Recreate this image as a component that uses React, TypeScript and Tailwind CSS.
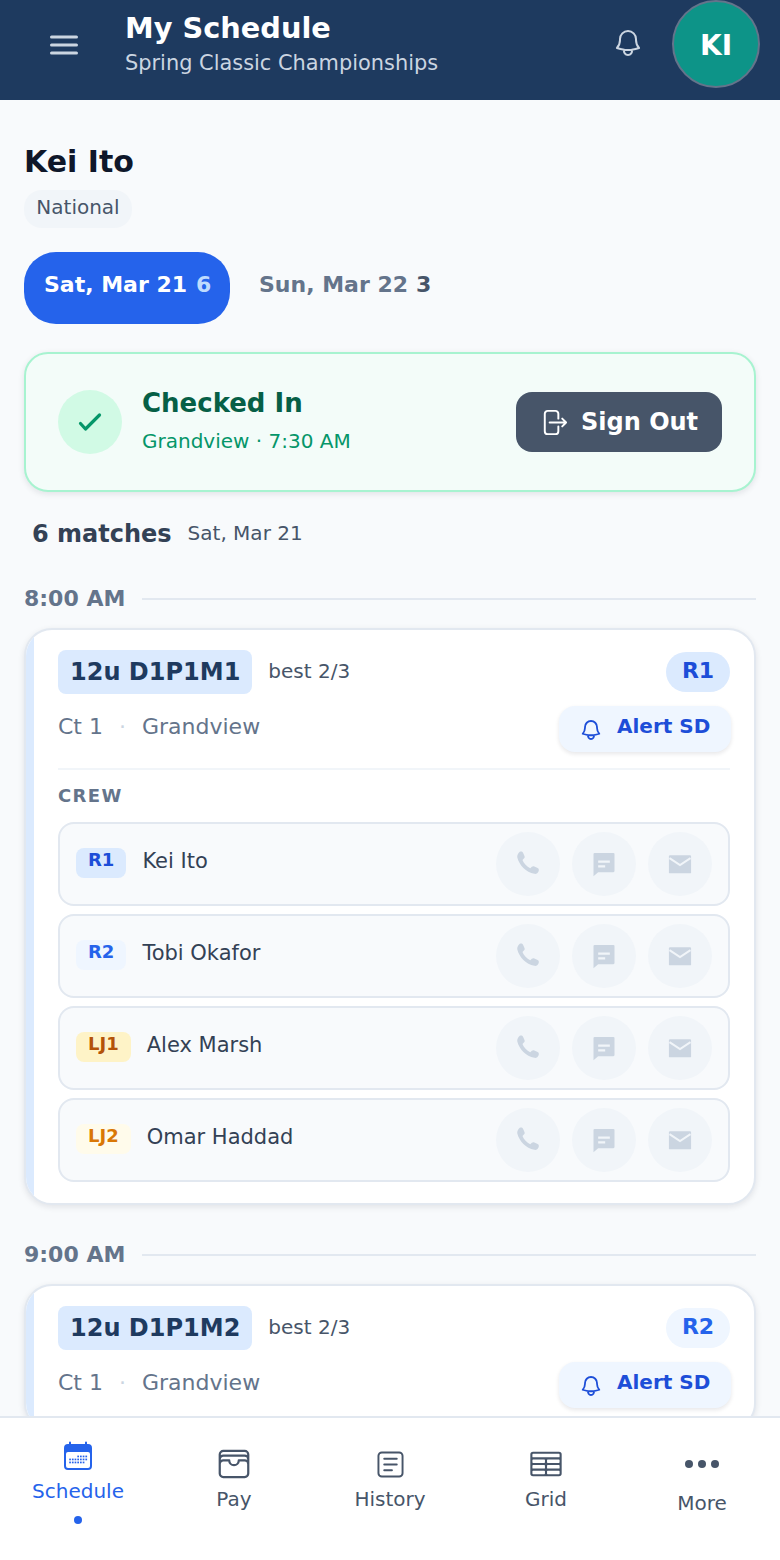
import React from "react";

const FONT = "font-['DejaVu_Sans',sans-serif]";

function Hero({ d, className, sw = 1.5 }: { d: string; className: string; sw?: number }) {
  return (
    <svg viewBox="0 0 24 24" fill="none" stroke="currentColor" strokeWidth={sw} strokeLinecap="round" strokeLinejoin="round" className={className}>
      <path d={d} />
    </svg>
  );
}

const BELL = "M14.857 17.082a23.848 23.848 0 005.454-1.31A8.967 8.967 0 0118 9.75v-.7V9A6 6 0 006 9v.75a8.967 8.967 0 01-2.312 6.022c1.733.64 3.56 1.085 5.455 1.31m5.714 0a24.255 24.255 0 01-5.714 0m5.714 0a3 3 0 11-5.714 0";
const SIGNOUT = "M15.75 9V5.25A2.25 2.25 0 0013.5 3h-6a2.25 2.25 0 00-2.25 2.25v13.5A2.25 2.25 0 007.5 21h6a2.25 2.25 0 002.25-2.25V15m3 0l3-3m0 0l-3-3m3 3H9";
const WALLET = "M21 12a2.25 2.25 0 00-2.25-2.25H15a3 3 0 11-6 0H5.25A2.25 2.25 0 003 12m18 0v6a2.25 2.25 0 01-2.25 2.25H5.25A2.25 2.25 0 013 18v-6m18 0V9M3 12V9m18 0a2.25 2.25 0 00-2.25-2.25H5.25A2.25 2.25 0 003 9m18 0V6a2.25 2.25 0 00-2.25-2.25H5.25A2.25 2.25 0 003 6v3";
const TABLE = "M3.375 19.5h17.25m-17.25 0a1.125 1.125 0 01-1.125-1.125M3.375 19.5h7.5c.621 0 1.125-.504 1.125-1.125m-9.75 0V5.625m0 12.75v-1.5c0-.621.504-1.125 1.125-1.125m18.375 2.625V5.625m0 12.75c0 .621-.504 1.125-1.125 1.125m1.125-1.125v-1.5c0-.621-.504-1.125-1.125-1.125m0 3.75h-7.5A1.125 1.125 0 0112 18.375m9.75-12.75c0-.621-.504-1.125-1.125-1.125H3.375c-.621 0-1.125.504-1.125 1.125m19.5 0v1.5c0 .621-.504 1.125-1.125 1.125M2.25 5.625v1.5c0 .621.504 1.125 1.125 1.125m0 0h17.25m-17.25 0h7.5c.621 0 1.125.504 1.125 1.125M3.375 8.25c-.621 0-1.125.504-1.125 1.125v1.5c0 .621.504 1.125 1.125 1.125m17.25-3.75h-7.5c-.621 0-1.125.504-1.125 1.125m8.625-1.125c.621 0 1.125.504 1.125 1.125v1.5c0 .621-.504 1.125-1.125 1.125m-17.25 0h7.5m-7.5 0c-.621 0-1.125.504-1.125 1.125v1.5c0 .621.504 1.125 1.125 1.125M12 10.875v-1.5m0 1.5c0 .621-.504 1.125-1.125 1.125M12 10.875c0 .621.504 1.125 1.125 1.125m-2.25 0c.621 0 1.125.504 1.125 1.125M13.125 12h7.5m-7.5 0c-.621 0-1.125.504-1.125 1.125M20.625 12c.621 0 1.125.504 1.125 1.125v1.5c0 .621-.504 1.125-1.125 1.125m-17.25 0h7.5M12 14.625v-1.5m0 1.5c0 .621-.504 1.125-1.125 1.125M12 14.625c0 .621.504 1.125 1.125 1.125m-2.25 0c.621 0 1.125.504 1.125 1.125m0 1.5v-1.5m0 0c0-.621.504-1.125 1.125-1.125m0 0h7.5";

function CalendarIcon() {
  const rows: [number, number[]][] = [
    [14.6, [14.3, 17, 19.7, 22.4]],
    [17.6, [6.2, 8.9, 11.6, 14.3, 17, 19.7, 22.4]],
    [20.6, [6.2, 8.9, 11.6, 14.3, 17, 19.7]],
  ];
  return (
    <svg viewBox="0 0 30 30" className="w-[30px] h-[30px] text-[#2563eb]" fill="currentColor">
      <path d="M7 0.5a1 1 0 0 1 1 1V3h14V1.5a1 1 0 0 1 2 0V3h1a4 4 0 0 1 4 4v18a4 4 0 0 1-4 4H5a4 4 0 0 1-4-4V7a4 4 0 0 1 4-4h1V1.5a1 1 0 0 1 1-1z" />
      <rect x="3" y="11" width="24" height="16" rx="2" fill="#ffffff" />
      {rows.flatMap(([y, xs]) => xs.map((x) => <rect key={`${x}-${y}`} x={x} y={y} width="1.7" height="1.7" />))}
    </svg>
  );
}

function HistoryIcon() {
  return (
    <svg viewBox="0 0 28 28" fill="none" stroke="currentColor" strokeWidth="2" strokeLinecap="round" className="w-[27px] h-[27px] mt-[1px]">
      <rect x="1.500" y="1.500" width="25" height="25" rx="3.500" />
      <path d="M7.500 8h13M7.500 14h13M7.500 20h8" />
    </svg>
  );
}

function Phone() {
  return (
    <svg viewBox="0 0 24 24" className="w-[34px] h-[34px] shrink-0 text-[#cbd5e1]" fill="currentColor">
      <path d="M6.200 3.400c.9-.5 1.900-.2 2.300.7l1 2.200c.3.700.2 1.400-.4 1.900l-1 .9c.9 2.400 3.100 4.800 5.500 5.900l1.100-1c.5-.5 1.200-.6 1.800-.3l2.300 1.200c.8.400 1.100 1.400.7 2.200l-.4.7c-.6.900-1.600 1.400-2.600 1.100C10.600 17.900 5.800 12.600 4.500 7.500c-.3-1 .1-2.400 1-3.400z" />
    </svg>
  );
}

function Chat() {
  return (
    <svg viewBox="0 0 24 24" className="w-[28px] h-[28px] text-[#cbd5e1]" fill="currentColor">
      <path fillRule="evenodd" d="M4 2.500h16a1 1 0 0 1 1 1V18a1 1 0 0 1-1 1H7l-4 3.500V3.500a1 1 0 0 1 1-1zM7 9v2h10V9H7zm0 4v2h6v-2H7z" />
    </svg>
  );
}

function Mail() {
  return (
    <svg viewBox="0 0 24 24" className="w-[28px] h-[28px] text-[#cbd5e1]" fill="currentColor">
      <path d="M3.500 4.500h17a1 1 0 0 1 1 1V19a1 1 0 0 1-1 1h-17a1 1 0 0 1-1-1V5.500a1 1 0 0 1 1-1z" />
      <path d="M3 7l9 6 9-6" fill="none" stroke="#f1f5f9" strokeWidth="1.7" />
    </svg>
  );
}

function CrewRow({ role, name, badge }: { role: string; name: string; badge: string }) {
  return (
    <div className="h-[84px] rounded-[16px] border-2 border-[#e2e8f0] bg-[#f8fafc] flex items-start pl-4 pr-4">
      <span className={`mt-6 h-[30px] px-3 rounded-lg text-[18px] leading-[24px] font-bold ${badge}`}>{role}</span>
      <span className="ml-4 mt-[19px] text-[21px] leading-[36px] text-[#334155]">{name}</span>
      <div className="ml-auto mt-2 flex gap-3">
        {[<Phone key="p" />, <Chat key="c" />, <Mail key="m" />].map((icon, i) => (
          <span key={i} className="w-16 h-16 rounded-full bg-[#f1f5f9] flex items-center justify-center">{icon}</span>
        ))}
      </div>
    </div>
  );
}

function TimeRow({ time }: { time: string }) {
  return (
    <div className="flex items-center gap-[17px] h-[30px]">
      <span className="text-[22px] font-bold text-[#64748b] leading-[30px]">{time}</span>
      <span className="flex-1 h-[2px] bg-[#e2e8f0]" />
    </div>
  );
}

function MatchCard({ code, tag, tagClass, crew }: { code: string; tag: string; tagClass: string; crew?: boolean }) {
  return (
    <div className="mt-[14px] rounded-[28px] border-2 border-[#e2e8f0] bg-white shadow-[0_2px_6px_rgba(15,23,42,0.1)] overflow-hidden">
      <div className="border-l-8 border-[#dbeafe] pl-6 pr-6 pt-5 pb-[21px]">
        <div className="flex items-center h-[44px]">
          <span className="h-[44px] px-3 rounded-lg bg-[#dbeafe] text-[24px] leading-[44px] font-bold text-[#1e3a5f]">{code}</span>
          <span className="ml-4 -mt-[2px] text-[20px] text-[#475569]">best 2/3</span>
          <span className={`ml-auto w-16 h-10 pb-1 rounded-full flex items-center justify-center text-[22px] font-bold ${tagClass}`}>{tag}</span>
        </div>
        <div className="flex items-center mt-3 h-[46px]">
          <span className="flex items-center -mt-[6px]">
            <span className="text-[22px] text-[#64748b]">Ct 1</span>
            <span className="mx-4 text-[22px] text-[#cbd5e1]">·</span>
            <span className="text-[22px] text-[#64748b]">Grandview</span>
          </span>
          <span className="ml-auto -mr-px h-[46px] w-[172px] rounded-[16px] bg-[#eff6ff] shadow-[0_2px_4px_rgba(15,23,42,0.1)] flex items-center gap-[14px] pl-5 text-[#1d4ed8] text-[20px] font-bold">
            <Hero d={BELL} className="w-[24px] h-[24px] shrink-0 mt-[2px]" sw={1.8} />
            <span className="-mt-[6px]">Alert SD</span>
          </span>
        </div>
        {crew && (
          <>
            <div className="mt-4 h-[2px] bg-[#f1f5f9]" />
            <div className="mt-[15px] text-[18px] leading-[22px] font-bold tracking-[1.4px] text-[#64748b]">CREW</div>
            <div className="mt-[15px] flex flex-col gap-2">
              <CrewRow role="R1" name="Kei Ito" badge="bg-[#dbeafe] text-[#1d4ed8]" />
              <CrewRow role="R2" name="Tobi Okafor" badge="bg-[#eff6ff] text-[#2563eb]" />
              <CrewRow role="LJ1" name="Alex Marsh" badge="bg-[#fef3c7] text-[#b45309]" />
              <CrewRow role="LJ2" name="Omar Haddad" badge="bg-[#fffbeb] text-[#d97706]" />
            </div>
          </>
        )}
      </div>
    </div>
  );
}

function NavItem({ icon, label, active, labelClass }: { icon: React.ReactNode; label: string; active?: boolean; labelClass: string }) {
  return (
    <div className={`flex flex-col items-center ${active ? "text-[#2563eb]" : "text-[#475569]"}`}>
      {icon}
      <span className={`text-[20px] leading-[28px] ${labelClass}`}>{label}</span>
      {active && <span className="mt-[11px] w-2 h-2 rounded-full bg-[#2563eb]" />}
    </div>
  );
}

export default function App() {
  return (
    <div className={`${FONT} w-[780px] h-[1560px] flex flex-col overflow-hidden bg-[#f8fafc]`}>
      <header className="h-[100px] shrink-0 bg-[#1e3a5f] flex items-start">
        <svg viewBox="0 0 28 20" fill="none" stroke="#cbd5e1" strokeWidth="3" strokeLinecap="round" className="ml-[50px] mt-[35px] w-[28px] h-[20px]">
          <path d="M1.500 2h25M1.500 10h25M1.500 18h25" />
        </svg>
        <div className="ml-[47px]">
          <div className="text-[28.8px] leading-[38px] mt-[9px] font-bold text-white">My Schedule</div>
          <div className="text-[20.9px] leading-[30px] mt-[1px] text-[#cbd5e1]">Spring Classic Championships</div>
        </div>
        <div className="ml-auto mt-[27px] mr-[28px] text-[#cbd5e1]">
          <Hero d={BELL} className="w-[32px] h-[32px]" />
        </div>
        <div className="mr-5 w-[88px] h-[88px] pt-1 rounded-full bg-[#0d9488] border-2 border-[#64748b] flex items-center justify-center text-[28px] font-bold text-white">KI</div>
      </header>

      <main className="flex-1 min-h-0 overflow-hidden px-6">
        <h1 className="mt-[43px] text-[30px] leading-[38px] font-bold text-[#0f172a]">Kei Ito</h1>
        <span className="mt-[9px] inline-block h-[38px] w-[108px] rounded-[18px] bg-[#f1f5f9] text-center text-[20px] leading-[34px] text-[#475569]">National</span>
        <div className="mt-6 flex items-start">
          <span className="h-[72px] w-[206px] rounded-[32px] bg-[#2563eb] flex items-start pl-5 pt-[17px] text-[22px] leading-[32px] font-bold text-white gap-[9px]">
            Sat, Mar 21 <span className="text-[#bfdbfe]">6</span>
          </span>
          <span className="ml-[29px] pt-[17px] flex gap-[8px] text-[22px] leading-[32px] font-bold text-[#64748b]">
            Sun, Mar 22 <span className="text-[#475569]">3</span>
          </span>
        </div>

        <section className="mt-7 h-[140px] rounded-[24px] border-2 border-[#a7f3d0] bg-[#f3fcf9] shadow-[0_2px_6px_rgba(15,23,42,0.1)] flex items-center px-8">
          <span className="w-16 h-16 rounded-full bg-[#d1fae5] flex items-center justify-center text-[#059669]">
            <svg viewBox="0 0 36 36" fill="none" stroke="currentColor" strokeWidth="3.200" strokeLinecap="round" strokeLinejoin="round" className="w-[36px] h-[36px]"><path d="M8.500 19.500l5 5.500L27.500 11" /></svg>
          </span>
          <div className="ml-5">
            <div className="text-[26px] leading-[36px] -mt-[4px] font-bold text-[#065f46]">Checked In</div>
            <div className="mt-[5px] text-[20px] leading-[30px] text-[#059669]">Grandview · 7:30 AM</div>
          </div>
          <span className="ml-auto h-[60px] w-[206px] rounded-[16px] bg-[#475569] flex items-center gap-[12px] pl-[22px] text-[24px] font-bold text-white">
            <Hero d={SIGNOUT} className="w-[31px] h-[31px] shrink-0" />
            Sign Out
          </span>
        </section>

        <div className="mt-6 ml-2 flex items-center gap-4 h-[36px]">
          <span className="text-[24px] font-bold text-[#334155]">6 matches</span>
          <span className="text-[20px] -mt-[2px] text-[#475569]">Sat, Mar 21</span>
        </div>

        <div className="mt-8"><TimeRow time="8:00 AM" /></div>
        <MatchCard code="12u D1P1M1" tag="R1" tagClass="bg-[#dbeafe] text-[#1d4ed8]" crew />
        <div className="mt-[35px]"><TimeRow time="9:00 AM" /></div>
        <MatchCard code="12u D1P1M2" tag="R2" tagClass="bg-[#eff6ff] text-[#2563eb]" />
      </main>

      <nav className="h-[144px] shrink-0 border-t-2 border-[#e2e8f0] bg-white grid grid-cols-5">
        <div className="pt-[23px]"><NavItem active icon={<CalendarIcon />} label="Schedule" labelClass="mt-[6px]" /></div>
        <div className="pt-[32px]"><NavItem icon={<Hero d={WALLET} className="w-[38px] h-[38px] -my-[5px]" sw={1.4} />} label="Pay" labelClass="mt-[7px]" /></div>
        <div className="pt-[32px]"><NavItem icon={<HistoryIcon />} label="History" labelClass="mt-[7px]" /></div>
        <div className="pt-[32px]"><NavItem icon={<Hero d={TABLE} className="w-[36px] h-[36px] -my-1" sw={1.4} />} label="Grid" labelClass="mt-[7px]" /></div>
        <div className="pt-[40px]"><NavItem icon={<svg viewBox="0 0 36 12" fill="currentColor" className="w-[36px] h-[12px]"><circle cx="5" cy="6" r="4" /><circle cx="18" cy="6" r="4" /><circle cx="31" cy="6" r="4" /></svg>} label="More" labelClass="mt-[19px]" /></div>
      </nav>
    </div>
  );
}
